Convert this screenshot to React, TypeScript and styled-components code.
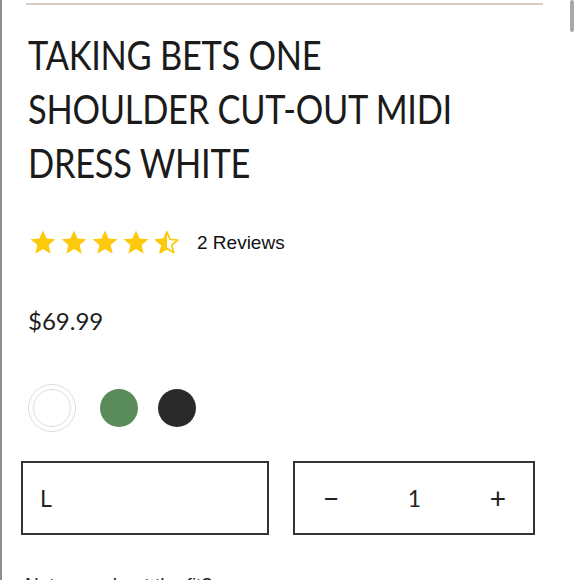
import React from "react";
import styled, { createGlobalStyle } from "styled-components";

const Global = createGlobalStyle`
  html, body { margin: 0; padding: 0; background: #fff; }
  body { font-family: "Lato", "Liberation Sans", sans-serif; color: #1a1a1a; overflow: hidden; }
`;

const Page = styled.div`
  position: relative;
  width: 580px;
  height: 580px;
  box-sizing: border-box;
  border-left: 2px solid #8f8f8f;
  overflow: hidden;
`;

const ScrollThumb = styled.div`
  position: absolute;
  top: 0;
  right: 6px;
  width: 4px;
  height: 32px;
  border-radius: 2px;
  background: #a9a9a9;
`;

const Content = styled.div`
  padding: 3px 0 0 24px;
  display: flex;
  flex-direction: column;
`;

const TopRule = styled.div`
  width: 517px;
  height: 2px;
  background: #dccbbf;
`;

const Title = styled.h1`
  margin: 23px 0 0 2px;
  font-family: "Lato", sans-serif;
  font-weight: 400;
  font-size: 40px;
  line-height: 54px;
  letter-spacing: -0.3px;
  color: #1b1b1b;
  text-transform: uppercase;
  white-space: nowrap;
  transform: scaleX(0.86);
  transform-origin: left top;
`;

const RatingRow = styled.div`
  display: flex;
  align-items: center;
  gap: 17px;
  margin: 40px 0 0 4px;
`;

const Stars = styled.div`
  display: flex;
  gap: 5px;
`;

const Reviews = styled.span`
  font-family: "Liberation Sans", Arial, sans-serif;
  font-size: 19px;
  color: #111;
`;

const Price = styled.div`
  margin: 51px 0 0 2px;
  font-family: "Lato", sans-serif;
  font-size: 24px;
  color: #1d1d1d;
`;

const Swatches = styled.div`
  display: flex;
  align-items: center;
  gap: 20px;
  margin: 54px 0 0 7px;
`;

const Swatch = styled.div<{ $color: string; $selected?: boolean }>`
  width: 38px;
  height: 38px;
  border-radius: 50%;
  box-sizing: border-box;
  background: ${(p) => p.$color};
  border: ${(p) => (p.$selected ? "1.5px solid #dcdcdc" : "none")};
  outline: ${(p) => (p.$selected ? "1.5px solid #dcdcdc" : "none")};
  outline-offset: 4px;
  margin-right: ${(p) => (p.$selected ? "9px" : "0")};
`;

const Selectors = styled.div`
  display: flex;
  gap: 24px;
  margin: 34px 0 0 -5px;
`;

const Box = styled.div<{ $w: number }>`
  width: ${(p) => p.$w}px;
  height: 74px;
  box-sizing: border-box;
  border: 2px solid #333;
  display: flex;
  align-items: center;
  font-family: "Lato", sans-serif;
  font-weight: 400;
  font-size: 23px;
  color: #222;
`;

const SizeBox = styled(Box)`
  padding-left: 17px;
`;

const QtyBox = styled(Box)`
  justify-content: space-between;
  padding: 0 27px 0 28px;
`;

const QtyBtn = styled.span`
  font-size: 28px;
`;

const Note = styled.div`
  margin: 39px 0 0 -1px;
  font-family: "Liberation Sans", Arial, sans-serif;
  font-size: 19px;
  color: #222;
`;

const Star = ({ fill }: { fill: "full" | "half" }) => (
  <svg width="26" height="25" viewBox="0 0 24 23">
    <defs>
      <clipPath id="halfclip">
        <rect x="0" y="0" width="12" height="23" />
      </clipPath>
    </defs>
    {fill === "full" ? (
      <polygon
        points="12,0.5 15.3,7.8 23.4,8.5 17.2,13.8 19.1,21.8 12,17.5 4.9,21.8 6.8,13.8 0.6,8.5 8.7,7.8"
        fill="#fdc90c"
      />
    ) : (
      <>
        <polygon
          points="12,1.8 14.8,8.6 22,9.2 16.4,13.9 18.2,20.8 12,17 5.8,20.8 7.6,13.9 2,9.2 9.2,8.6"
          fill="none"
          stroke="#fdc90c"
          strokeWidth="1.6"
          strokeLinejoin="round"
        />
        <polygon
          points="12,0.5 15.3,7.8 23.4,8.5 17.2,13.8 19.1,21.8 12,17.5 4.9,21.8 6.8,13.8 0.6,8.5 8.7,7.8"
          fill="#fdc90c"
          clipPath="url(#halfclip)"
        />
      </>
    )}
  </svg>
);

export default function App() {
  return (
    <Page>
      <Global />
      <ScrollThumb />
      <Content>
        <TopRule />
        <Title>
          Taking Bets One
          <br />
          Shoulder Cut-Out Midi
          <br />
          Dress White
        </Title>
        <RatingRow>
          <Stars>
            <Star fill="full" />
            <Star fill="full" />
            <Star fill="full" />
            <Star fill="full" />
            <Star fill="half" />
          </Stars>
          <Reviews>2 Reviews</Reviews>
        </RatingRow>
        <Price>$69.99</Price>
        <Swatches>
          <Swatch $color="#ffffff" $selected />
          <Swatch $color="#5a8b5a" />
          <Swatch $color="#2a2a2a" />
        </Swatches>
        <Selectors>
          <SizeBox $w={248}>L</SizeBox>
          <QtyBox $w={242}>
            <QtyBtn>−</QtyBtn>
            <span>1</span>
            <QtyBtn>+</QtyBtn>
          </QtyBox>
        </Selectors>
        <Note>Not sure about the fit?</Note>
      </Content>
    </Page>
  );
}
